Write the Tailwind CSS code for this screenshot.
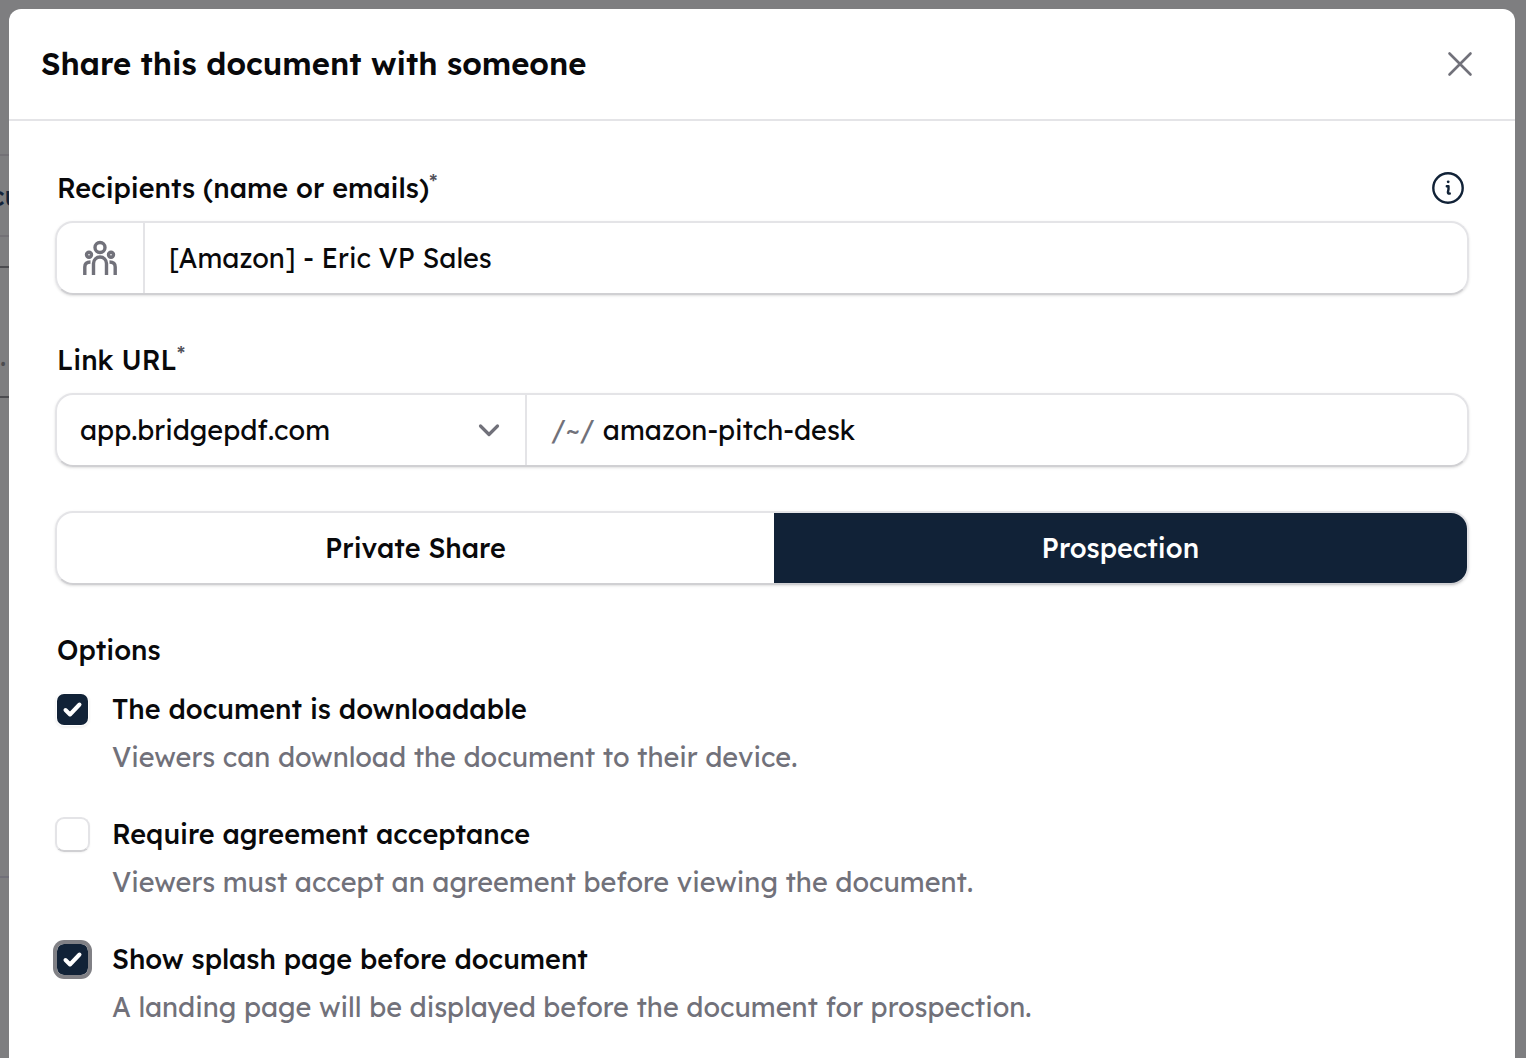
<!DOCTYPE html>
<html lang="en">
<head>
    <meta charset="UTF-8">
    <meta name="viewport" content="width=device-width, initial-scale=1.0">
    <script src="https://cdn.jsdelivr.net/npm/@tailwindcss/browser@4"></script>
    <title>Share document</title>
</head>
<body class="relative h-screen overflow-hidden bg-[#7e7e80] font-['Lexend','Inter',sans-serif] text-[27px] leading-8 text-[#09090b]">

    <!-- page behind the dialog -->
    <div class="absolute inset-y-0 left-0 flex w-1/2 flex-col overflow-hidden" aria-hidden="true">
        <div class="h-[154px]"></div>
        <div class="flex h-[83px] items-center border-y-2 border-[#737176] font-medium text-[#13233a]"><span class="-ml-2.5">cu</span></div>
        <div class="h-[29px]"></div>
        <div class="h-[132px] border-y-2 border-[#4c4c50] pt-[72px] text-[#4c4c50]">.</div>
        <div class="h-[480px] border-b-2 border-[#717079]"></div>
    </div>

    <!-- dialog -->
    <div class="relative h-full pt-[9px] pr-[11px] pl-[9px]">
        <div role="dialog" aria-labelledby="title" class="h-full rounded-t-xl bg-white">
            <div class="flex h-28 items-center justify-between border-b-2 border-[#e4e4e7] pr-[39px] pl-8">
                <h1 id="title" class="text-[31px] leading-[34px] font-semibold">Share this document with someone</h1>
                <button type="button" aria-label="Close" class="text-[#71717a]">
                    <svg class="size-8" viewBox="0 0 32 32" fill="none" stroke="currentColor" stroke-width="2.600" stroke-linecap="round"><path d="M5.500 5.500l21 21M26.500 5.500l-21 21"/></svg>
                </button>
            </div>

            <form class="px-[46px] pt-[51px]">
                <div class="mb-[17px] flex items-center justify-between pr-[5px] pl-0.5">
                    <label for="recipients" class="font-medium">Recipients (name or emails)<sup class="-top-2 text-[22px] leading-none font-normal text-[#52525b]">*</sup></label>
                    <button type="button" aria-label="About recipients" class="text-[#112237]">
                        <svg class="size-8" viewBox="0 0 32 32" fill="none" stroke="currentColor" stroke-width="2.400" stroke-linecap="round" stroke-linejoin="round"><circle cx="16" cy="16" r="14.700"/><path d="M14.800 14.200h1.700v3l-.6 3q0 1.800 1.900 1.300"/><circle cx="16.200" cy="9.800" r="1.400" fill="currentColor" stroke="none"/></svg>
                    </button>
                </div>
                <div class="mb-[49px] flex h-[74px] overflow-hidden rounded-[18px] border-2 border-[#e4e4e7] border-b-[#d0d0d3] shadow-sm">
                    <span class="flex w-[88px] items-center justify-center border-r-2 border-[#e4e4e7] text-[#71717a]">
                        <svg class="size-9" viewBox="0 0 36 36" fill="none" stroke="currentColor" stroke-width="3.400"><circle cx="18" cy="7.500" r="5"/><circle cx="7" cy="14.800" r="2.500"/><circle cx="29" cy="14.800" r="2.500"/><path d="M11.500 35V23.500a6.500 6.500 0 0 1 13 0V35"/><path d="M2.800 35v-8c0-3.500 2-5 5.700-5M33.200 35v-8c0-3.500-2-5-5.700-5"/></svg>
                    </span>
                    <input id="recipients" type="text" value="[Amazon] - Eric VP Sales" class="min-w-0 flex-1 px-6 outline-none">
                </div>

                <div class="mb-[17px] flex h-8 items-center pl-0.5">
                    <label for="slug" class="font-medium">Link URL<sup class="-top-2 text-[22px] leading-none font-normal text-[#52525b]">*</sup></label>
                </div>
                <div class="mb-[44px] flex h-[74px] overflow-hidden rounded-[18px] border-2 border-[#e4e4e7] border-b-[#d0d0d3] shadow-sm">
                    <div class="grid w-1/3 items-center border-r-2 border-[#e4e4e7]">
                        <select aria-label="Domain" class="col-start-1 row-start-1 h-full appearance-none bg-transparent pl-[23px] outline-none">
                            <option>app.bridgepdf.com</option>
                        </select>
                        <svg class="pointer-events-none col-start-1 row-start-1 mr-6 h-6 w-6 justify-self-end text-[#71717a]" viewBox="0 0 24 24" fill="none" stroke="currentColor" stroke-width="3.200" stroke-linecap="round" stroke-linejoin="round"><path d="M3.500 8l8.500 8.500L20.500 8"/></svg>
                    </div>
                    <span class="flex items-center pl-6 text-[#71717a]">/~/</span>
                    <input id="slug" type="text" value="amazon-pitch-desk" class="min-w-0 flex-1 px-2 outline-none">
                </div>

                <div class="mb-[49px] flex h-[74px] overflow-hidden rounded-[18px] border-2 border-[#e4e4e7] border-b-[#d0d0d3] font-medium shadow-sm">
                    <button type="button" class="flex-auto">Private Share</button>
                    <button type="button" class="flex-auto bg-[#112237] text-white">Prospection</button>
                </div>

                <fieldset class="flex flex-col">
                    <legend class="mb-[19px] pl-0.5 font-medium">Options</legend>
                    <div class="flex flex-col gap-[29px]">
                        <div class="flex gap-[22px]">
                            <div class="grid h-12 place-items-center">
                                <input id="download" type="checkbox" checked class="peer col-start-1 row-start-1 size-[35px] appearance-none rounded-[9px] border-2 border-[#e4e4e7] border-b-[#d0d0d3] bg-clip-padding shadow-xs outline-none checked:border-transparent checked:bg-[#112237]">
                                <svg class="pointer-events-none col-start-1 row-start-1 hidden size-6 text-white peer-checked:block" viewBox="0 0 24 24" fill="none" stroke="currentColor" stroke-width="4" stroke-linecap="round" stroke-linejoin="round"><path d="M4.500 13l4.500 4.500L18.500 7.500"/></svg>
                            </div>
                            <div class="leading-[48px]">
                                <label for="download" class="block font-medium">The document is downloadable</label>
                                <p class="text-[#71717a]">Viewers can download the document to their device.</p>
                            </div>
                        </div>
                        <div class="flex gap-[22px]">
                            <div class="grid h-12 place-items-center">
                                <input id="agreement" type="checkbox" class="peer col-start-1 row-start-1 size-[35px] appearance-none rounded-[9px] border-2 border-[#e4e4e7] border-b-[#d0d0d3] bg-clip-padding shadow-xs outline-none checked:border-transparent checked:bg-[#112237]">
                                <svg class="pointer-events-none col-start-1 row-start-1 hidden size-6 text-white peer-checked:block" viewBox="0 0 24 24" fill="none" stroke="currentColor" stroke-width="4" stroke-linecap="round" stroke-linejoin="round"><path d="M4.500 13l4.500 4.500L18.500 7.500"/></svg>
                            </div>
                            <div class="leading-[48px]">
                                <label for="agreement" class="block font-medium">Require agreement acceptance</label>
                                <p class="text-[#71717a]">Viewers must accept an agreement before viewing the document.</p>
                            </div>
                        </div>
                        <div class="flex gap-[22px]">
                            <div class="grid h-12 place-items-center">
                                <input id="splash" type="checkbox" checked class="peer col-start-1 row-start-1 size-[35px] appearance-none rounded-[9px] border-2 border-[#808085] bg-[#112237] bg-clip-padding ring-2 ring-[#808085] outline-none">
                                <svg class="pointer-events-none col-start-1 row-start-1 hidden size-6 text-white peer-checked:block" viewBox="0 0 24 24" fill="none" stroke="currentColor" stroke-width="4" stroke-linecap="round" stroke-linejoin="round"><path d="M4.500 13l4.500 4.500L18.500 7.500"/></svg>
                            </div>
                            <div class="leading-[48px]">
                                <label for="splash" class="block font-medium">Show splash page before document</label>
                                <p class="text-[#71717a]">A landing page will be displayed before the document for prospection.</p>
                            </div>
                        </div>
                    </div>
                </fieldset>
            </form>
        </div>
    </div>
</body>
</html>
